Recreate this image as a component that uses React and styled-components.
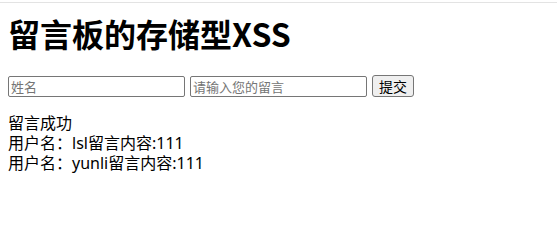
import React from 'react';
import styled, { createGlobalStyle } from 'styled-components';

const GlobalStyle = createGlobalStyle`
  body {
    margin: 0;
    background: #ffffff;
    font-family: "Noto Sans", "Noto Sans CJK SC", sans-serif;
    color: #000000;
  }
`;

const TopLine = styled.div`
  margin-top: 2px;
  height: 1px;
  background-color: #e3e3e3;
`;

const Page = styled.div`
  padding: 0 8px;
`;

const Title = styled.h1`
  margin: 10px 0 0 0;
  font-size: 32px;
  line-height: 40px;
  font-weight: bold;
  font-family: "Noto Sans CJK SC", sans-serif;
`;

const Form = styled.form`
  display: flex;
  align-items: center;
  gap: 5px;
  margin-top: 22px;
`;

const Field = styled.input`
  box-sizing: border-box;
  width: 177px;
  height: 21px;
  padding: 1px 2px;
  border: 1px solid #767676;
  border-radius: 2px;
  font-size: 13px;
  font-family: "Noto Sans CJK SC", sans-serif;
  &::placeholder {
    color: #757575;
  }
`;

const Submit = styled.button`
  box-sizing: border-box;
  height: 22px;
  padding: 0 6px;
  border: 1px solid #767676;
  border-radius: 3px;
  background-color: #efefef;
  font-size: 14px;
  font-family: "Noto Sans CJK SC", sans-serif;
`;

const Messages = styled.div`
  margin-top: 16px;
  font-size: 16px;
  line-height: 20px;
  font-family: "Noto Sans", "Noto Sans CJK SC", sans-serif;
`;

const Line = styled.div``;

const messages = [
  { user: 'lsl', content: '111' },
  { user: 'yunli', content: '111' },
];

export default function App() {
  return (
    <>
      <GlobalStyle />
      <TopLine />
      <Page>
        <Title>留言板的存储型XSS</Title>
        <Form onSubmit={(e) => e.preventDefault()}>
          <Field placeholder="姓名" />
          <Field placeholder="请输入您的留言" />
          <Submit type="submit">提交</Submit>
        </Form>
        <Messages>
          <Line>留言成功</Line>
          {messages.map((m) => (
            <Line key={m.user}>
              用户名：{m.user}留言内容:{m.content}
            </Line>
          ))}
        </Messages>
      </Page>
    </>
  );
}
